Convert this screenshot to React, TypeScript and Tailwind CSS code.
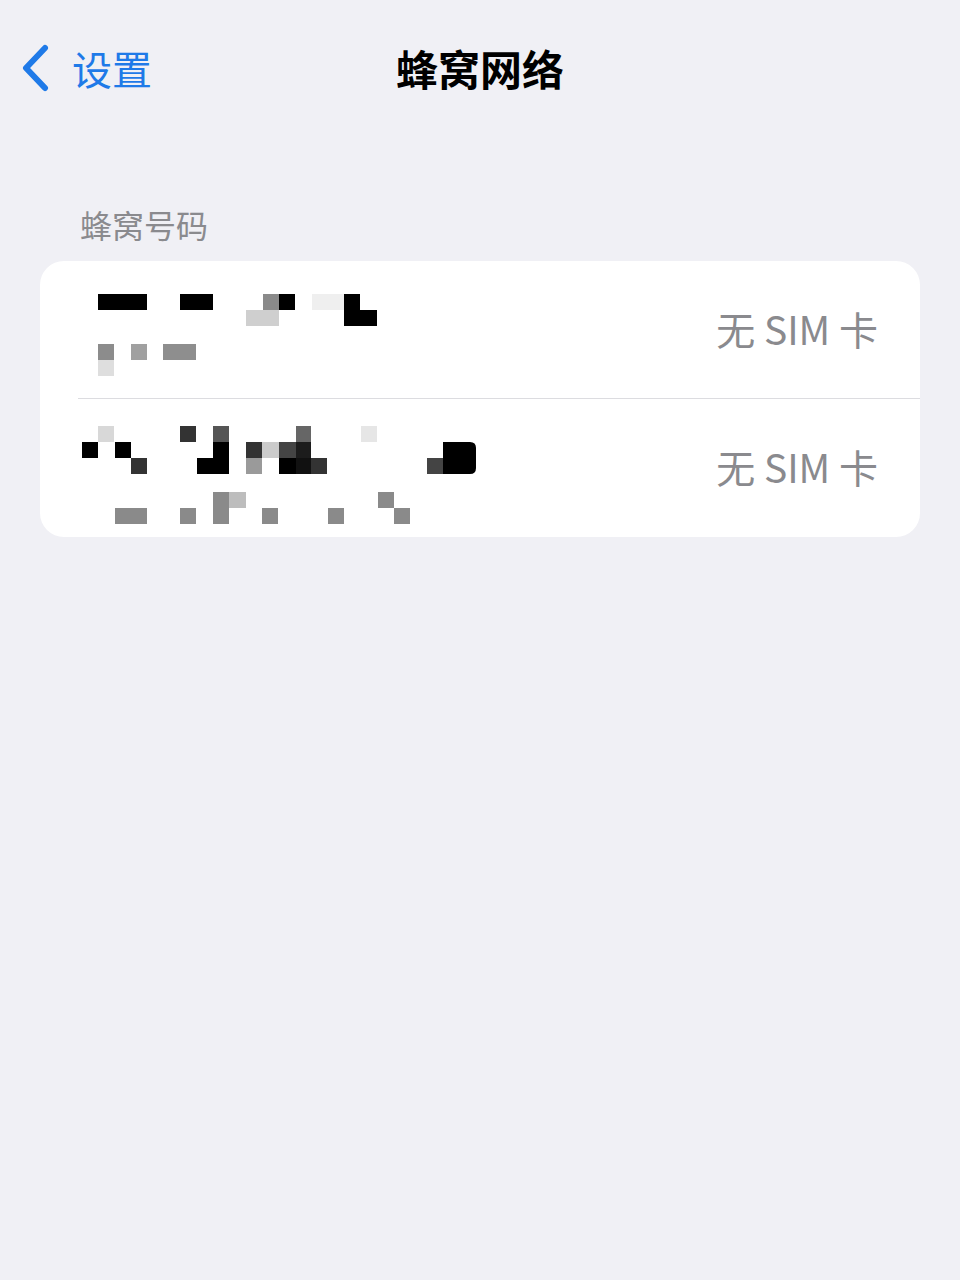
import React from 'react';

type Px = [number, number, number, number, string];

// pixelated (redacted) phone numbers
const mosaicA: Px[] = [
  [58, 33, 49, 16, '#000'],
  [140, 33, 33, 16, '#000'],
  [223, 33, 16, 16, '#8a8a8a'],
  [239, 33, 16, 16, '#000'],
  [206, 49, 33, 16, '#cfcfcf'],
  [272, 33, 32, 16, '#efefef'],
  [304, 33, 16, 32, '#000'],
  [320, 49, 17, 16, '#000'],
  [58, 83, 16, 16, '#8c8c8c'],
  [58, 99, 16, 16, '#dedede'],
  [91, 83, 16, 16, '#a0a0a0'],
  [123, 83, 33, 16, '#8e8e8e'],
];

const mosaicB: Px[] = [
  [58, 27, 16, 16, '#d8d8d8'],
  [42, 43, 16, 16, '#000'],
  [75, 43, 16, 16, '#000'],
  [91, 59, 16, 16, '#333'],
  [140, 27, 16, 16, '#333'],
  [173, 27, 16, 16, '#555'],
  [173, 43, 16, 16, '#000'],
  [157, 59, 32, 16, '#000'],
  [206, 43, 16, 16, '#333'],
  [222, 43, 17, 16, '#cbcbcb'],
  [239, 43, 17, 16, '#444'],
  [256, 43, 15, 16, '#1c1c1c'],
  [206, 59, 16, 16, '#9a9a9a'],
  [239, 59, 17, 16, '#000'],
  [256, 59, 15, 16, '#111'],
  [271, 59, 16, 16, '#333'],
  [256, 27, 15, 16, '#666'],
  [321, 27, 16, 16, '#e6e6e6'],
  [387, 59, 16, 16, '#444'],
  [75, 109, 32, 16, '#8a8a8a'],
  [140, 109, 16, 16, '#8a8a8a'],
  [173, 93, 16, 32, '#8a8a8a'],
  [189, 93, 17, 16, '#bdbdbd'],
  [222, 109, 16, 16, '#8a8a8a'],
  [288, 109, 16, 16, '#8a8a8a'],
  [338, 93, 16, 16, '#8a8a8a'],
  [354, 109, 16, 16, '#8a8a8a'],
];

const Mosaic: React.FC<{ cells: Px[]; extra?: React.ReactNode }> = ({ cells, extra }) => (
  <svg width="440" height="138" viewBox="0 0 440 138" className="shrink-0">
    {cells.map(([x, y, w, h, c], i) => (
      <rect key={i} x={x} y={y} width={w} height={h} fill={c} />
    ))}
    {extra}
  </svg>
);

const SimRow: React.FC<{ cells: Px[]; extra?: React.ReactNode; divider?: boolean }> = ({ cells, extra, divider }) => (
  <div className="relative flex h-[138px] items-center justify-between pr-[42px]">
    <Mosaic cells={cells} extra={extra} />
    <span className="-mt-[4px] text-[39px] text-[#8a8a8e]">无 SIM 卡</span>
    {divider && <div className="absolute bottom-0 left-[38px] right-0 h-px bg-[#dcdce0]" />}
  </div>
);

export default function App() {
  return (
    <div
      className="min-h-[1280px] w-[960px] bg-[#f0f0f5]"
      style={{ fontFamily: '"Noto Sans CJK SC", "Noto Sans", sans-serif' }}
    >
      {/* nav bar */}
      <div className="grid h-[142px] grid-cols-[1fr_auto_1fr] items-start pt-[41px]">
        <div className="flex items-center gap-[22px] pl-[20px] text-[#1f7ae8]">
          <svg width="30" height="48" viewBox="0 0 30 48" fill="none">
            <path d="M25 4 L6 24 L25 44" stroke="currentColor" strokeWidth="6" strokeLinecap="round" strokeLinejoin="round" />
          </svg>
          <span className="text-[40px] leading-[54px]">设置</span>
        </div>
        <div className="text-[42px] font-bold leading-[54px] text-black">蜂窝网络</div>
        <div />
      </div>

      {/* cellular numbers section */}
      <div className="mt-[61px] pl-[80px] text-[32px] leading-[42px] text-[#8a8a8e]">蜂窝号码</div>
      <div className="mx-[40px] mt-[16px] overflow-hidden rounded-[24px] bg-white">
        <SimRow cells={mosaicA} divider />
        <SimRow
          cells={mosaicB}
          extra={<path d="M403 43 H430 Q436 43 436 49 V69 Q436 75 430 75 H403 Z" fill="#000" />}
        />
      </div>
    </div>
  );
}
